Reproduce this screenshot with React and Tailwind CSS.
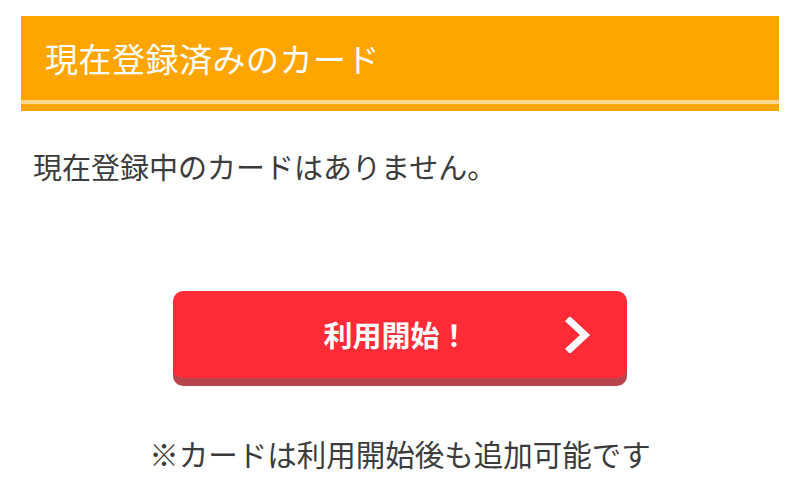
const font = { fontFamily: '"Noto Sans CJK JP", "Noto Sans", sans-serif' };

const ChevronRight = () => (
  <svg width="26" height="36" viewBox="0 0 26 36" fill="none">
    <path d="M5 4 L20 18 L5 32" stroke="white" strokeWidth="7" strokeLinecap="square" strokeLinejoin="miter" />
  </svg>
);

export default function App() {
  return (
    <div className="w-[800px] h-[502px] bg-white overflow-hidden" style={font}>
      <div className="mx-[21px] mt-[16px] bg-[#ffa502]">
        <div className="h-[84px] flex items-center pl-[24px]">
          <h2 className="text-white text-[33px] leading-none tracking-[0.5px]">現在登録済みのカード</h2>
        </div>
        <div className="h-[4px] bg-[#ffd88f]" />
        <div className="h-[7px]" />
      </div>

      <p className="mt-[35px] pl-[33px] text-[29px] leading-[40px] text-[#3c3c3c]">
        現在登録中のカードはありません。
      </p>

      <div className="mt-[105px] flex justify-center">
        <button className="relative w-[454px] h-[87px] rounded-[10px] bg-[#ff2b36] shadow-[0_8px_0_#b8434b] flex items-center justify-center">
          <span className="text-white text-[29px] font-bold leading-none pr-[8px]">利用開始！</span>
          <span className="absolute right-[36px] top-1/2 -translate-y-1/2 flex">
            <ChevronRight />
          </span>
        </button>
      </div>

      <p className="mt-[55px] text-center text-[29.5px] leading-[40px] text-[#3c3c3c]">
        ※カードは利用開始後も追加可能です
      </p>
    </div>
  );
}
